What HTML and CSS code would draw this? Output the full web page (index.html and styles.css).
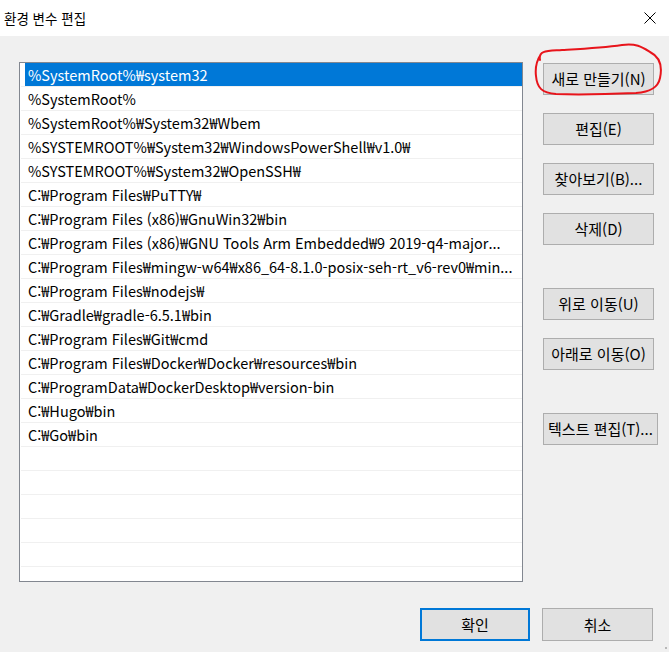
FILE: index.html
```html
<!DOCTYPE html>
<html lang="ko">
<head>
<meta charset="utf-8">
<title>환경 변수 편집</title>
<link rel="stylesheet" href="styles.css">
</head>
<body>
<div class="window">
  <header class="titlebar">
    <span class="title">환경 변수 편집</span>
    <svg class="close" width="12" height="12" viewBox="0 0 12 12" aria-hidden="true">
      <path d="M0.5 0.5 L11.5 11.5 M11.5 0.5 L0.5 11.5" stroke="#000" stroke-width="1" fill="none"/>
    </svg>
  </header>

  <main class="content">
    <div class="main">
      <div class="list">
        <div class="row selected"><span class="cell">%SystemRoot%₩system32</span></div>
        <div class="row"><span class="cell">%SystemRoot%</span></div>
        <div class="row"><span class="cell">%SystemRoot%₩System32₩Wbem</span></div>
        <div class="row"><span class="cell">%SYSTEMROOT%₩System32₩WindowsPowerShell₩v1.0₩</span></div>
        <div class="row"><span class="cell">%SYSTEMROOT%₩System32₩OpenSSH₩</span></div>
        <div class="row"><span class="cell">C:₩Program Files₩PuTTY₩</span></div>
        <div class="row"><span class="cell">C:₩Program Files (x86)₩GnuWin32₩bin</span></div>
        <div class="row"><span class="cell">C:₩Program Files (x86)₩GNU Tools Arm Embedded₩9 2019-q4-major...</span></div>
        <div class="row"><span class="cell">C:₩Program Files₩mingw-w64₩x86_64-8.1.0-posix-seh-rt_v6-rev0₩min...</span></div>
        <div class="row"><span class="cell">C:₩Program Files₩nodejs₩</span></div>
        <div class="row"><span class="cell">C:₩Gradle₩gradle-6.5.1₩bin</span></div>
        <div class="row"><span class="cell">C:₩Program Files₩Git₩cmd</span></div>
        <div class="row"><span class="cell">C:₩Program Files₩Docker₩Docker₩resources₩bin</span></div>
        <div class="row"><span class="cell">C:₩ProgramData₩DockerDesktop₩version-bin</span></div>
        <div class="row"><span class="cell">C:₩Hugo₩bin</span></div>
        <div class="row"><span class="cell">C:₩Go₩bin</span></div>
        <div class="row"><span class="cell"></span></div>
        <div class="row"><span class="cell"></span></div>
        <div class="row"><span class="cell"></span></div>
        <div class="row"><span class="cell"></span></div>
        <div class="row"><span class="cell"></span></div>
        <div class="row"><span class="cell"></span></div>
      </div>

      <div class="side">
        <div class="group">
          <div class="btn-wrap">
            <button class="btn">새로 만들기(N)</button>
            <svg class="mark" width="134" height="60" viewBox="0 0 134 60" aria-hidden="true">
              <path d="M6 18 C4 8 14 9 28 8 C46 7 68 6 88 3 C102 1 108 5 116 10 C124 14 129 22 126 36 C124 46 116 50 102 51 C78 52 48 53 22 52 C8 51 3 46 2 34 C1 26 3 18 7 12"
                    fill="none" stroke="#e8141b" stroke-width="2" stroke-linecap="round" stroke-linejoin="round"/>
            </svg>
          </div>
          <button class="btn">편집(E)</button>
          <button class="btn">찾아보기(B)...</button>
          <button class="btn">삭제(D)</button>
        </div>
        <div class="group">
          <button class="btn">위로 이동(U)</button>
          <button class="btn">아래로 이동(O)</button>
        </div>
        <div class="group">
          <button class="btn btn-wide">텍스트 편집(T)...</button>
        </div>
      </div>
    </div>

    <footer class="footer">
      <button class="btn btn-foot btn-default">확인</button>
      <button class="btn btn-foot">취소</button>
    </footer>

    <svg class="grip" width="4" height="4" viewBox="0 0 4 4" aria-hidden="true">
      <rect x="1" y="1" width="2" height="2" fill="#b8b8b8"/>
    </svg>
  </main>
</div>
</body>
</html>
```

FILE: styles.css
```css
* {
  box-sizing: border-box;
}

html,
body {
  margin: 0;
  padding: 0;
}

body {
  width: 669px;
  height: 652px;
  overflow: hidden;
  font-family: "Noto Sans CJK KR", "Noto Sans", sans-serif;
  color: #000;
}

.window {
  display: flex;
  flex-direction: column;
  width: 669px;
  height: 652px;
}

/* title bar */
.titlebar {
  height: 36px;
  flex: none;
  background: #fff;
  display: flex;
  align-items: center;
  justify-content: space-between;
  padding: 0 13px 0 4px;
}

.title {
  font-size: 13.5px;
  line-height: 20px;
  margin-top: -1px;
}

.close {
  display: block;
}

/* dialog body */
.content {
  position: relative;
  flex: 1;
  background: #f0f0f0;
  padding: 26px 16px 0 19px;
  display: flex;
  flex-direction: column;
}

.main {
  display: flex;
  gap: 20px;
}

/* path list */
.list {
  width: 504px;
  height: 520px;
  flex: none;
  border: 1px solid #828790;
  background: #fff;
  overflow: hidden;
  padding-left: 1px;
}

.row {
  height: 24px;
  border-bottom: 1px solid #f0f0f0;
}

.cell {
  display: block;
  height: 23px;
  margin-left: 4px;
  padding: 0 4px 0 3px;
  font-size: 14.5px;
  line-height: 24px;
  white-space: nowrap;
  overflow: hidden;
  text-overflow: ellipsis;
}

.row.selected .cell {
  background: #0078d7;
  color: #fff;
}

/* button column */
.side {
  width: 111px;
  flex: none;
  margin-top: 1px;
  display: flex;
  flex-direction: column;
  gap: 43px;
}

.group {
  display: flex;
  flex-direction: column;
  gap: 18px;
}

.btn-wrap {
  position: relative;
}

.btn {
  display: block;
  width: 111px;
  height: 32px;
  margin: 0;
  padding: 0;
  background: #e1e1e1;
  border: 1px solid #adadad;
  border-radius: 0;
  font-family: "Noto Sans CJK KR", "Noto Sans", sans-serif;
  font-size: 15px;
  line-height: 28px;
  color: #000;
  white-space: nowrap;
  text-align: center;
}

.btn-wide {
  width: 115px;
}

/* hand-drawn highlight around the first button */
.mark {
  position: absolute;
  left: -9px;
  top: -21px;
  pointer-events: none;
}

/* OK / Cancel */
.footer {
  display: flex;
  justify-content: flex-end;
  gap: 12px;
  margin-top: 26px;
}

.btn-foot {
  width: 111px;
  height: 33px;
}

.btn-default {
  width: 110px;
  border: 2px solid #0078d7;
}

.grip {
  position: absolute;
  right: 1px;
  bottom: 2px;
}
```
